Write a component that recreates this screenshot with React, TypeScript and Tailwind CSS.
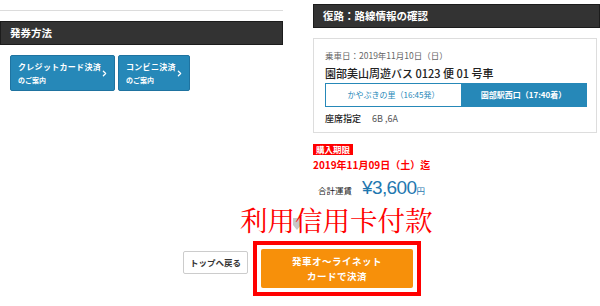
import { ChevronRight } from 'lucide-react';

const jp = { fontFamily: '"Noto Sans CJK JP", "Noto Sans", sans-serif' };

const GuideButton = ({ title, width }: { title: string; width: string }) => (
  <button
    className={`relative flex h-[36px] flex-col items-start justify-center rounded-[2px] border border-[#1f73a0] bg-[#2688b8] pl-[7px] text-left text-white ${width}`}
  >
    <span className="whitespace-nowrap text-[8px] font-bold leading-[14px] tracking-[0.3px]">{title}</span>
    <span className="whitespace-nowrap text-[7px] font-bold leading-[12px]">のご案内</span>
    <ChevronRight className="absolute right-[5px] top-[13px] h-[9px] w-[9px]" strokeWidth={3.5} />
  </button>
);

export default function App() {
  return (
    <div className="relative h-[306px] w-[600px] overflow-hidden bg-white text-[#333]" style={jp}>
      <div className="flex">
        {/* left: ticket method */}
        <div className="w-[283px] shrink-0 pt-[10px]">
          <div className="h-px bg-[#dcdcdc]" />
          <div className="mt-[10px] flex h-[24px] items-center border border-[#1c1c1c] bg-[#333333] pl-[9px] text-[10.5px] font-bold text-white">
            発券方法
          </div>
          <div className="ml-[10px] mt-[10px] flex gap-[3px]">
            <GuideButton title="クレジットカード決済" width="w-[105px]" />
            <GuideButton title="コンビニ決済" width="w-[72px]" />
          </div>
        </div>

        {/* right: return route */}
        <div className="ml-[30px] w-[287px] shrink-0 pt-[4px]">
          <div className="flex h-[24px] items-center border border-[#1c1c1c] bg-[#333333] pl-[9px] text-[10.5px] font-bold text-white">
            復路：路線情報の確認
          </div>
          <div className="mt-[10px] h-[95px] w-[284px] border border-[#dddddd] px-[11px] pt-[10px]">
            <div className="text-[8.5px] leading-[12px] text-[#666]">乗車日：2019年11月10日（日）</div>
            <div className="mt-[5px] text-[11px] font-medium leading-[14px] text-[#222]">
              園部美山周遊バス 0123 便 01 号車
            </div>
            <div className="mt-[3px] flex h-[24px] w-[262px] border border-[#2688b8] text-[8px]">
              <div className="flex w-[135px] items-center justify-center text-[#2688b8]">かやぶきの里（16:45発）</div>
              <div className="flex flex-1 items-center justify-center bg-[#2688b8] font-bold text-white">
                園部駅西口（17:40着）
              </div>
            </div>
            <div className="mt-[6px] flex text-[9px] leading-[12px]">
              <span className="w-[47px] font-medium text-[#222]">座席指定</span>
              <span className="text-[#555]">6B ,6A</span>
            </div>
          </div>
          <div className="mt-[11px] inline-block bg-[#ff0000] px-[3px] text-[8.5px] font-bold leading-[11px] text-white">
            購入期限
          </div>
          <div className="text-[10px] font-bold leading-[14px] text-[#ff0000]">2019年11月09日（土）迄</div>
          <div className="mt-[4px] flex items-baseline pl-[5px]">
            <span className="w-[44px] text-[8.5px] text-[#222]">合計運賃</span>
            <span
              className="text-[19px] leading-[24px] tracking-[-0.6px] text-[#1f78b0]"
              style={{ fontFamily: '"Liberation Sans", sans-serif' }}
            >
              ¥3,600
            </span>
            <span className="text-[8.5px] text-[#1f78b0]">円</span>
          </div>
        </div>
      </div>

      {/* annotation */}
      <div className="relative mt-[3px] h-[38px] pl-[240px]">
        <svg className="absolute left-[293px] top-[15px]" width="8" height="12" viewBox="0 0 8 12">
          <polygon points="0,0 8,0 8,7 4,12 0,7" fill="#c8c8c8" />
        </svg>
        <span
          className="relative block text-[27.5px] leading-[32px] text-[#ff0000]"
          style={{ fontFamily: '"Noto Serif CJK TC", "Noto Serif CJK JP", "Noto Sans CJK TC", serif' }}
        >
          利用信用卡付款
        </span>
      </div>

      {/* bottom buttons */}
      <div className="flex items-start pl-[183px]">
        <button className="mt-[10px] flex h-[23px] w-[65px] items-center justify-center rounded-[2px] border border-[#cccccc] bg-white text-[8.5px] font-bold text-[#333]">
          トップへ戻る
        </button>
        <div className="ml-[5px] border-[4px] border-[#ff0000] bg-white p-[4px]">
          <button className="flex h-[39px] w-[152px] flex-col items-center justify-center rounded-[2px] bg-[#f7900a] text-[9.5px] font-bold leading-[15px] tracking-[0.5px] text-white">
            <span>発車オ～ライネット</span>
            <span>カードで決済</span>
          </button>
        </div>
      </div>
    </div>
  );
}
